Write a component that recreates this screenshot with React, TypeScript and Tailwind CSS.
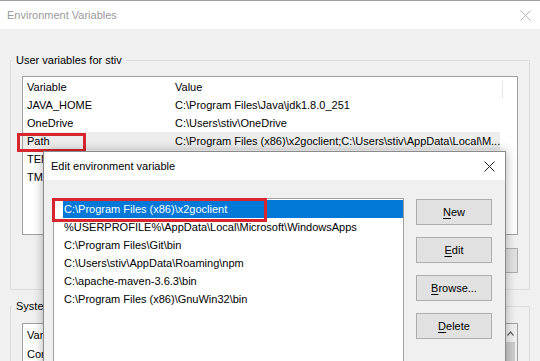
import React from 'react';

const userVars = [
  { name: 'JAVA_HOME', value: 'C:\\Program Files\\Java\\jdk1.8.0_251' },
  { name: 'OneDrive', value: 'C:\\Users\\stiv\\OneDrive' },
  { name: 'Path', value: 'C:\\Program Files (x86)\\x2goclient;C:\\Users\\stiv\\AppData\\Local\\M...', selected: true },
  { name: 'TEMP', value: 'C:\\Users\\stiv\\AppData\\Local\\Temp' },
  { name: 'TMP', value: 'C:\\Users\\stiv\\AppData\\Local\\Temp' },
];

const pathEntries = [
  'C:\\Program Files (x86)\\x2goclient',
  '%USERPROFILE%\\AppData\\Local\\Microsoft\\WindowsApps',
  'C:\\Program Files\\Git\\bin',
  'C:\\Users\\stiv\\AppData\\Roaming\\npm',
  'C:\\apache-maven-3.6.3\\bin',
  'C:\\Program Files (x86)\\GnuWin32\\bin',
];

const CloseIcon = ({ color }: { color: string }) => (
  <svg width="11" height="11" viewBox="0 0 11 11">
    <path d="M0.5 0.5 L10.5 10.5 M10.5 0.5 L0.5 10.5" stroke={color} strokeWidth="1" fill="none" />
  </svg>
);

const WinButton = ({ label, keyChar }: { label: string; keyChar: string }) => (
  <div className="h-[26px] w-[76px] flex items-center justify-center bg-[#e1e1e1] border border-[#adadad] text-black">
    <span>
      <span className="underline underline-offset-2">{keyChar}</span>
      {label.slice(1)}
    </span>
  </div>
);

export default function App() {
  return (
    <div className="relative w-[540px] h-[361px] overflow-hidden bg-[#f0f0f0] text-[11px] leading-[18px] text-black font-['Liberation_Sans',Arial,sans-serif]">
      {/* background window: Environment Variables */}
      <div className="h-[29px] bg-white border-t border-[#a0a0a0] flex items-center justify-between pl-[7px] pr-[9px]">
        <span className="text-[#9a9a9a]">Environment Variables</span>
        <CloseIcon color="#b5b5b5" />
      </div>

      <div className="px-[10px] pt-[23px]">
        <fieldset className="border border-[#dcdcdc] px-[11px] pb-[16px]">
          <legend className="px-[4px] ml-[-10px] leading-[16px]">User variables for stiv</legend>
          <div className="mt-[8px] h-[159px] bg-white border border-[#a0a0a0] pt-[1px]">
            <div className="relative flex h-[18px] pl-[4px]">
              <span className="w-[148px]">Variable</span>
              <span>Value</span>
              <span className="absolute left-[479px] top-[3px] h-[17px] w-px bg-[#e5e5e5]" />
            </div>
            {userVars.map((v) => (
              <div
                key={v.name}
                className={`flex h-[18px] pl-[4px] mr-[17px] whitespace-nowrap overflow-hidden ${v.selected ? 'bg-[#ededed]' : ''}`}
              >
                <span className="w-[148px] shrink-0">{v.name}</span>
                <span>{v.value}</span>
              </div>
            ))}
          </div>
          <div className="mt-[13px] flex justify-end gap-[8px]">
            <div className="h-[25px] w-[75px] bg-[#e1e1e1] border border-[#adadad]" />
            <div className="h-[25px] w-[75px] bg-[#e1e1e1] border border-[#adadad]" />
            <div className="h-[25px] w-[75px] bg-[#e1e1e1] border border-[#adadad]" />
          </div>
        </fieldset>

        <fieldset className="mt-[8px] border border-[#dcdcdc] px-[11px] h-[120px]">
          <legend className="px-[4px] ml-[-10px] leading-[16px]">System variables</legend>
          <div className="mt-[9px] h-[100px] bg-white border border-[#a0a0a0] flex">
            <div className="flex-1 pt-[2px] pl-[4px]">
              <div className="flex h-[19px]">
                <span className="w-[148px]">Variable</span>
                <span>Value</span>
              </div>
              <div className="flex h-[18px]">
                <span className="w-[148px]">ComSpec</span>
                <span>C:\Windows\system32\cmd.exe</span>
              </div>
            </div>
            <div className="w-[13px] bg-[#f0f0f0] flex flex-col">
              <div className="h-[18px] flex items-center justify-center">
                <svg width="7" height="5" viewBox="0 0 7 5">
                  <path d="M0.5 4.5 L3.5 1 L6.5 4.5" stroke="#606060" strokeWidth="1.2" fill="none" />
                </svg>
              </div>
              <div className="mx-[2px] flex-1 bg-[#cdcdcd]" />
            </div>
          </div>
        </fieldset>
      </div>

      {/* red annotation around Path */}
      <div className="absolute left-[17px] top-[133px] w-[69px] h-[19px] border-[3px] border-[#d8262e]" />

      {/* foreground dialog: Edit environment variable */}
      <div className="absolute left-[43px] top-[151px] w-[463px] h-[230px] bg-[#f0f0f0] border border-[#8a8a8a] shadow-[0_0_10px_rgba(0,0,0,0.3)]">
        <div className="h-[28px] bg-white flex items-center justify-between pl-[7px] pr-[10px]">
          <span>Edit environment variable</span>
          <CloseIcon color="#222" />
        </div>
        <div className="flex pt-[18px] pl-[9px] pr-[12px] gap-[12px]">
          <div className="w-[351px] h-[200px] bg-white border-l border-t border-r border-[#a0a0a0] pt-[1px] pl-[9px]">
            {pathEntries.map((p, i) => (
              <div
                key={p}
                className={`h-[18px] pl-[1px] whitespace-nowrap ${i === 0 ? 'bg-[#0078d7] text-white' : ''}`}
              >
                {p}
              </div>
            ))}
          </div>
          <div className="flex flex-col gap-[12px] pt-[1px]">
            <WinButton label="New" keyChar="N" />
            <WinButton label="Edit" keyChar="E" />
            <WinButton label="Browse..." keyChar="B" />
            <WinButton label="Delete" keyChar="D" />
          </div>
        </div>
      </div>

      {/* red annotation around first entry */}
      <div className="absolute left-[52px] top-[198px] w-[215px] h-[24px] border-[3px] border-[#d8262e]" />
    </div>
  );
}
